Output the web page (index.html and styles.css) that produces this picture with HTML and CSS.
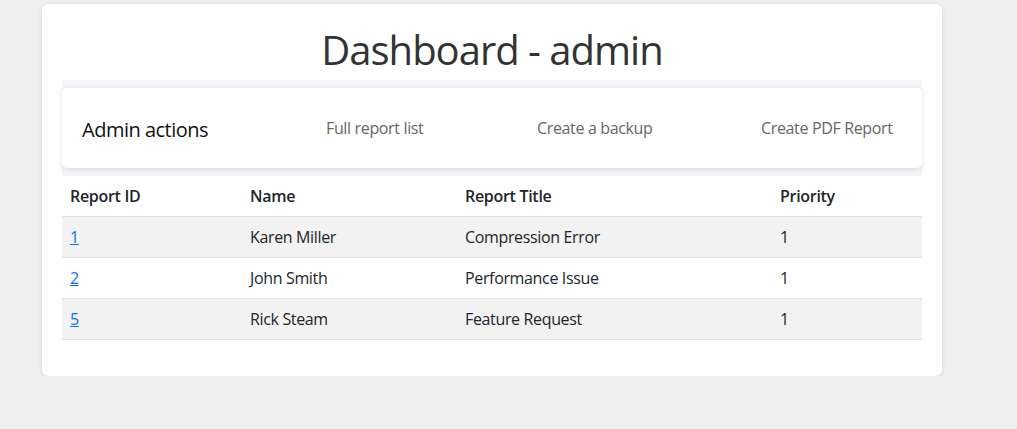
FILE: index.html
```html
<!DOCTYPE html>
<html>
<head>
<meta charset="utf-8">
<title>Dashboard - admin</title>
<link rel="stylesheet" href="styles.css">
</head>
<body>
<div class="card">
  <h1 class="title">Dashboard - admin</h1>
  <div class="nav-strip">
    <nav class="actions">
      <span class="actions-label">Admin actions</span>
      <a class="action-link link-list" href="#">Full report list</a>
      <a class="action-link link-backup" href="#">Create a backup</a>
      <a class="action-link link-pdf" href="#">Create PDF Report</a>
    </nav>
  </div>
  <table class="reports">
    <thead>
      <tr><th class="c-id">Report ID</th><th class="c-name">Name</th><th class="c-title">Report Title</th><th class="c-prio">Priority</th></tr>
    </thead>
    <tbody>
      <tr><td><a href="#">1</a></td><td>Karen Miller</td><td>Compression Error</td><td>1</td></tr>
      <tr><td><a href="#">2</a></td><td>John Smith</td><td>Performance Issue</td><td>1</td></tr>
      <tr><td><a href="#">5</a></td><td>Rick Steam</td><td>Feature Request</td><td>1</td></tr>
    </tbody>
  </table>
</div>
</body>
</html>
```

FILE: styles.css
```css
html, body { margin: 0; padding: 0; }
body {
  background: #efefef;
  font-family: "Open Sans", "Noto Sans", sans-serif;
  color: #212529;
  font-size: 16px;
  letter-spacing: -0.35px;
}
.card {
  box-sizing: border-box;
  width: 900px;
  margin: 4px 0 0 42px;
  background: #fff;
  border-radius: 6px;
  box-shadow: 0 1px 4px rgba(0,0,0,0.12);
  padding: 0 20px 36px;
}
.title {
  margin: 0;
  height: 76px;
  line-height: 92px;
  text-align: center;
  font-weight: 400;
  font-size: 40px;
  letter-spacing: -1px;
  color: #333;
  overflow: hidden;
}
.nav-strip {
  background: #f4f5f8;
  padding: 8px 0;
}
.actions {
  display: flex;
  align-items: center;
  height: 80px;
  background: #fff;
  border-radius: 5px;
  box-shadow: 0 1px 5px rgba(0,0,0,0.12);
  padding-left: 20px;
}
.actions-label {
  font-size: 20px;
  letter-spacing: -0.5px;
  color: #111;
  width: 244px;
  padding-top: 2px;
}
.action-link {
  color: #666;
  text-decoration: none;
  font-size: 16px;
}
.link-list { width: 211px; }
.link-backup { width: 224px; }
.reports {
  width: 100%;
  border-collapse: collapse;
}
.reports th, .reports td {
  text-align: left;
  padding: 0 8px;
  height: 40px;
  border-bottom: 1px solid #dee2e6;
}
.reports th { font-weight: 600; letter-spacing: -0.3px; }
.c-id { width: 164px; }
.c-name { width: 199px; }
.c-title { width: 299px; }
.reports tbody tr:nth-child(odd) td { background: #f2f2f2; }
.reports a { color: #0d6efd; text-decoration: underline; }
```
